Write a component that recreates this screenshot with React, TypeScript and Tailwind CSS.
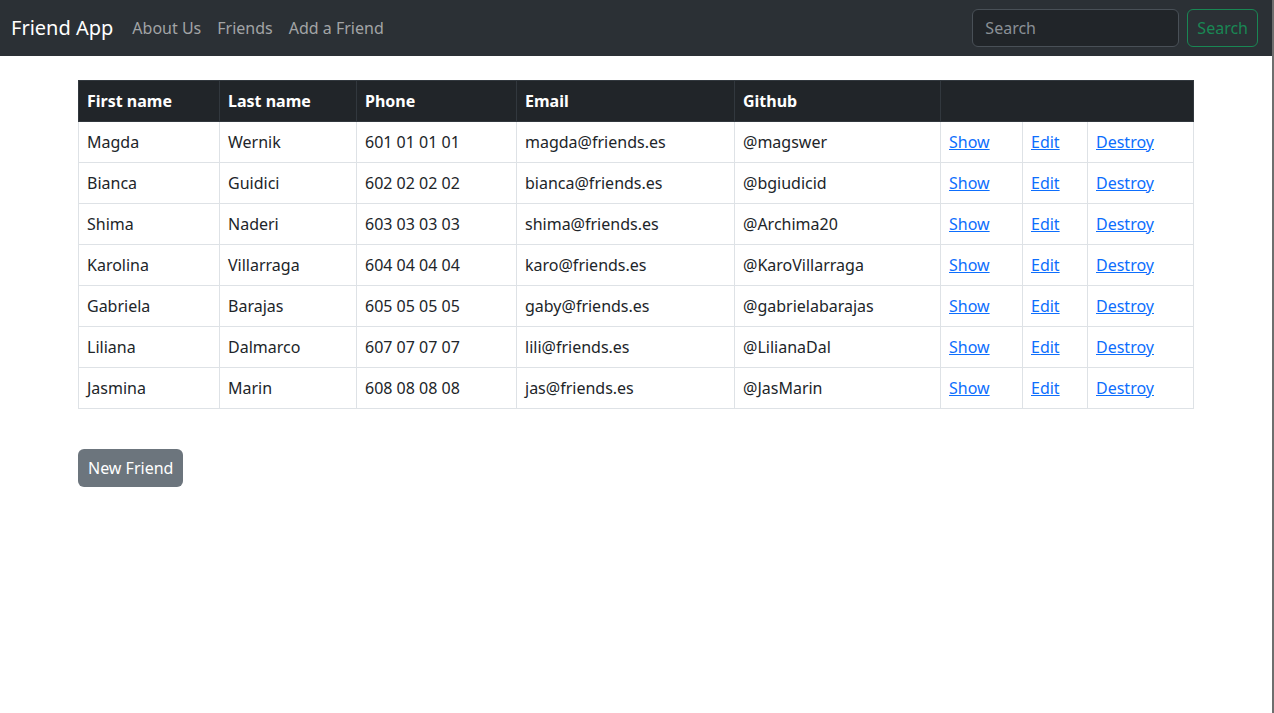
import React from 'react';

const friends = [
  { first: 'Magda', last: 'Wernik', phone: '601 01 01 01', email: 'magda@friends.es', github: '@magswer' },
  { first: 'Bianca', last: 'Guidici', phone: '602 02 02 02', email: 'bianca@friends.es', github: '@bgiudicid' },
  { first: 'Shima', last: 'Naderi', phone: '603 03 03 03', email: 'shima@friends.es', github: '@Archima20' },
  { first: 'Karolina', last: 'Villarraga', phone: '604 04 04 04', email: 'karo@friends.es', github: '@KaroVillarraga' },
  { first: 'Gabriela', last: 'Barajas', phone: '605 05 05 05', email: 'gaby@friends.es', github: '@gabrielabarajas' },
  { first: 'Liliana', last: 'Dalmarco', phone: '607 07 07 07', email: 'lili@friends.es', github: '@LilianaDal' },
  { first: 'Jasmina', last: 'Marin', phone: '608 08 08 08', email: 'jas@friends.es', github: '@JasMarin' },
];

const App: React.FC = () => {
  const td = 'border border-[#dee2e6] px-2 h-[41px] leading-6';
  const th = 'border border-[#32383e] px-2';
  const link = 'text-[#0d6efd] underline';

  return (
    <div className="min-h-[713px] bg-white text-[#212529] border-r-2 border-[#6e6e6e] text-base" style={{ fontFamily: '"Segoe UI", "Noto Sans", sans-serif' }}>
      {/* Navbar */}
      <nav className="h-14 bg-[#2b3035] flex items-center pl-[11px] pr-[14px]">
        <span className="text-white text-xl mr-[19px]">Friend App</span>
        <div className="flex gap-4 text-[#a2a4a6]">
          <span>About Us</span>
          <span>Friends</span>
          <span>Add a Friend</span>
        </div>
        <div className="ml-auto flex items-center gap-2">
          <div className="w-[207px] h-[38px] rounded-md border border-[#495057] bg-[#212529] px-3 flex items-center text-[#8a9096]">
            Search
          </div>
          <div className="h-[38px] px-[9px] rounded-md border border-[#198754] text-[#198754] flex items-center">
            Search
          </div>
        </div>
      </nav>

      {/* Table */}
      <div className="pl-[78px] pt-6">
        <table className="border-collapse w-[1116px] table-fixed">
          <colgroup>
            <col className="w-[141px]" />
            <col className="w-[137px]" />
            <col className="w-[160px]" />
            <col className="w-[218px]" />
            <col className="w-[206px]" />
            <col className="w-[82px]" />
            <col className="w-[65px]" />
            <col />
          </colgroup>
          <thead>
            <tr className="bg-[#212529] text-white font-bold text-left">
              <th className={`${th} h-[41px]`}>First name</th>
              <th className={th}>Last name</th>
              <th className={th}>Phone</th>
              <th className={th}>Email</th>
              <th className={th}>Github</th>
              <th className={th} colSpan={3}></th>
            </tr>
          </thead>
          <tbody>
            {friends.map((f) => (
              <tr key={f.email}>
                <td className={td}>{f.first}</td>
                <td className={td}>{f.last}</td>
                <td className={td}>{f.phone}</td>
                <td className={td}>{f.email}</td>
                <td className={td}>{f.github}</td>
                <td className={td}><span className={link}>Show</span></td>
                <td className={td}><span className={link}>Edit</span></td>
                <td className={td}><span className={link}>Destroy</span></td>
              </tr>
            ))}
          </tbody>
        </table>

        <button className="mt-10 h-[38px] px-[10px] rounded-md bg-[#6c757d] text-white">New Friend</button>
      </div>
    </div>
  );
};

export default App;
